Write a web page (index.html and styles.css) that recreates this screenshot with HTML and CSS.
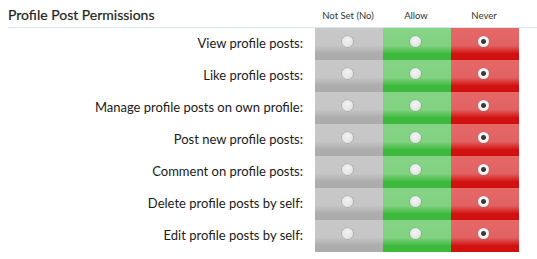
FILE: index.html
```html
<!DOCTYPE html>
<html>
<head>
<meta charset="utf-8">
<link rel="stylesheet" href="styles.css">
</head>
<body>
<div class="perms">
  <div class="head">
    <h3 class="title">Profile Post Permissions</h3>
    <div class="colhead">Not Set (No)</div>
    <div class="colhead">Allow</div>
    <div class="colhead">Never</div>
  </div>
  <div class="rows">
    <div class="label">View profile posts:</div>
    <div class="cell unset"><input type="radio" name="r1"></div>
    <div class="cell allow"><input type="radio" name="r1"></div>
    <div class="cell never"><input type="radio" name="r1" checked></div>

    <div class="label">Like profile posts:</div>
    <div class="cell unset"><input type="radio" name="r2"></div>
    <div class="cell allow"><input type="radio" name="r2"></div>
    <div class="cell never"><input type="radio" name="r2" checked></div>

    <div class="label">Manage profile posts on own profile:</div>
    <div class="cell unset"><input type="radio" name="r3"></div>
    <div class="cell allow"><input type="radio" name="r3"></div>
    <div class="cell never"><input type="radio" name="r3" checked></div>

    <div class="label">Post new profile posts:</div>
    <div class="cell unset"><input type="radio" name="r4"></div>
    <div class="cell allow"><input type="radio" name="r4"></div>
    <div class="cell never"><input type="radio" name="r4" checked></div>

    <div class="label">Comment on profile posts:</div>
    <div class="cell unset"><input type="radio" name="r5"></div>
    <div class="cell allow"><input type="radio" name="r5"></div>
    <div class="cell never"><input type="radio" name="r5" checked></div>

    <div class="label">Delete profile posts by self:</div>
    <div class="cell unset"><input type="radio" name="r6"></div>
    <div class="cell allow"><input type="radio" name="r6"></div>
    <div class="cell never"><input type="radio" name="r6" checked></div>

    <div class="label">Edit profile posts by self:</div>
    <div class="cell unset"><input type="radio" name="r7"></div>
    <div class="cell allow"><input type="radio" name="r7"></div>
    <div class="cell never"><input type="radio" name="r7" checked></div>
  </div>
</div>
</body>
</html>
```
FILE: styles.css
```css
html, body {
  margin: 0;
  padding: 0;
  background: #ffffff;
}
body {
  font-family: Lato, "Liberation Sans", sans-serif;
  color: #1e1e1e;
}
.perms {
  padding-left: 8px;
}
.head {
  display: grid;
  grid-template-columns: 1fr 68px 68px 68px 18px;
  height: 27px;
  border-bottom: 1px solid #dae5ee;
  align-items: end;
}
.title {
  margin: 0;
  font-size: 14px;
  font-weight: normal;
  line-height: 16px;
  padding-bottom: 4px;
  color: #222;
  -webkit-text-stroke: 0.2px #222;
}
.colhead {
  font-size: 9.5px;
  text-align: center;
  line-height: 12px;
  padding-bottom: 5px;
  padding-right: 2px;
  color: #333;
}
.rows {
  display: grid;
  grid-template-columns: 1fr 68px 68px 68px;
  grid-auto-rows: 32px;
  margin-right: 18px;
}
.label {
  font-size: 13px;
  text-align: right;
  padding-right: 12px;
  line-height: 31px;
  color: #1a1a1a;
}
.cell {
  display: flex;
  justify-content: center;
  align-items: flex-start;
  padding-top: 8px;
  padding-right: 3px;
  box-sizing: border-box;
}
.unset {
  background: linear-gradient(to bottom, #c8c8c8 0%, #c6c6c6 55%, #adadad 80%, #acacac 100%);
}
.allow {
  background: linear-gradient(to bottom, #86d486 0%, #82d282 55%, #3fbb3f 80%, #3cb93c 100%);
}
.never {
  background: linear-gradient(to bottom, #e56868 0%, #e26262 55%, #d21212 80%, #d00f0f 100%);
}
.cell input {
  appearance: none;
  -webkit-appearance: none;
  margin: 0;
  width: 11px;
  height: 11px;
  border-radius: 50%;
  background: radial-gradient(circle at 50% 40%, #f4f4f4 0%, #e4e4e4 70%, #d8d8d8 100%);
  box-shadow: 0 0 0 0.6px rgba(110,110,110,0.45);
}
.cell input:checked {
  background: radial-gradient(circle, #3a3a3a 0%, #3a3a3a 26%, #f6f6f6 38%, #e6e6e6 100%);
}
```
